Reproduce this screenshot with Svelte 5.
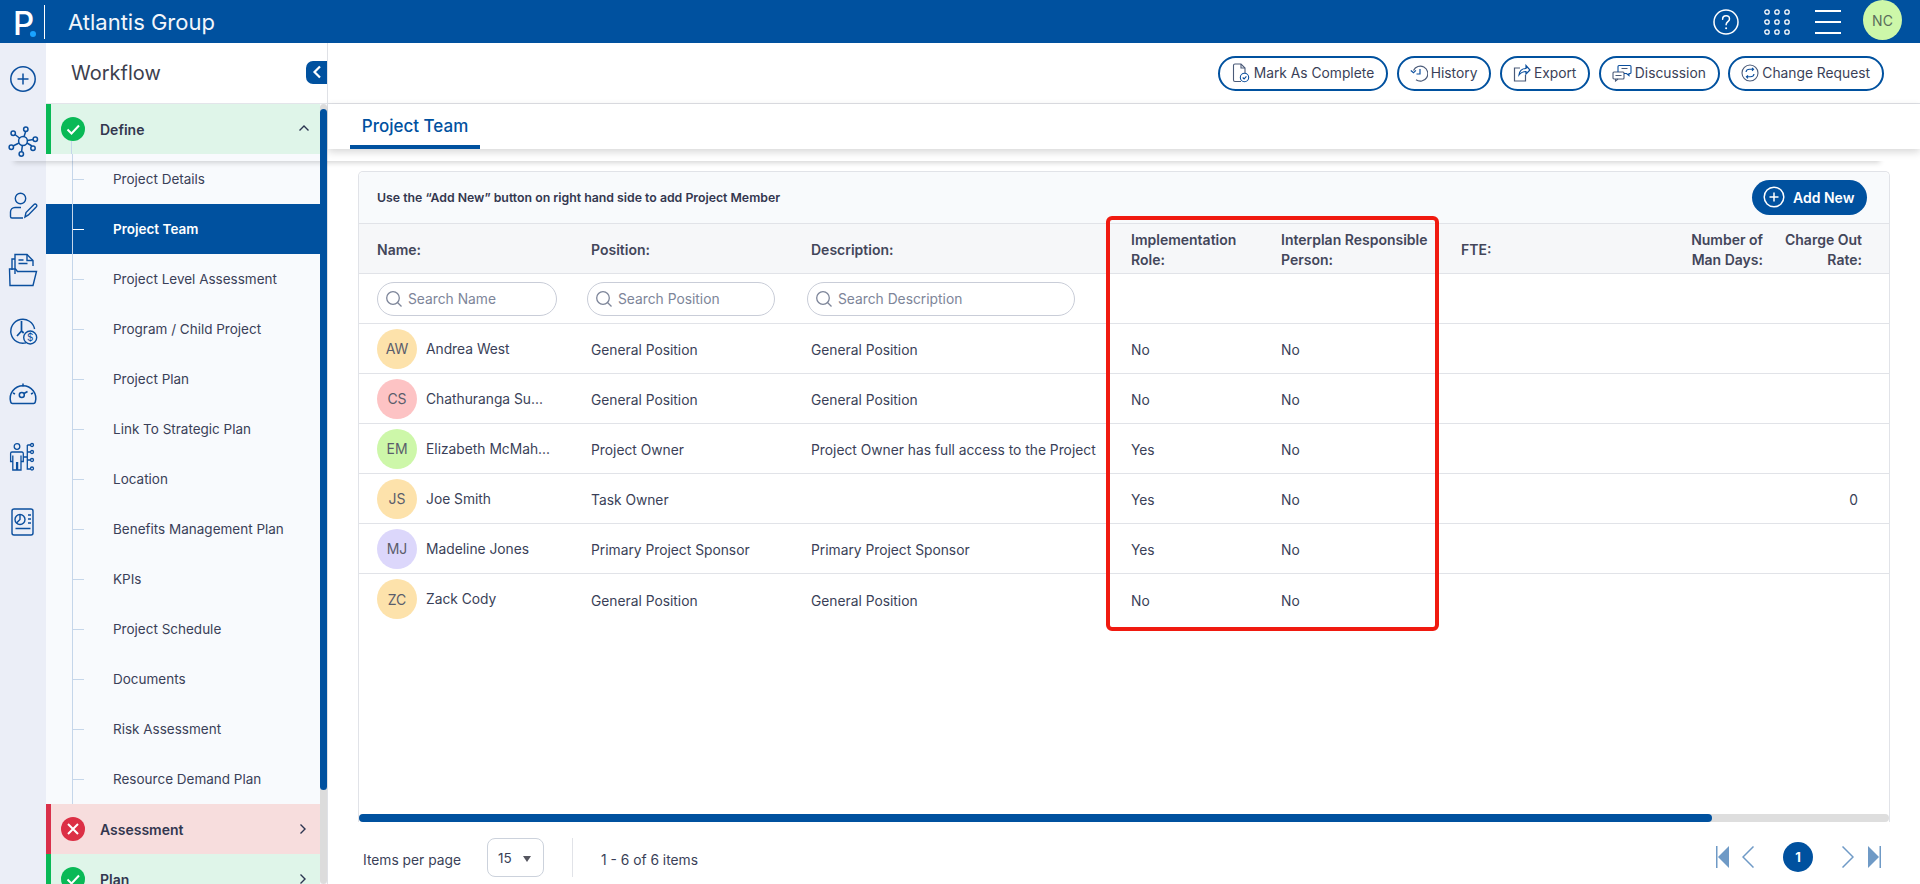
<script>
  const subItems = ['Project Details','Project Team','Project Level Assessment','Program / Child Project','Project Plan','Link To Strategic Plan','Location','Benefits Management Plan','KPIs','Project Schedule','Documents','Risk Assessment','Resource Demand Plan'];
  const people = [
    { i:'AW', c:'#fde2ab', n:'Andrea West', p:'General Position', d:'General Position', r:'No', ip:'No', rate:'' },
    { i:'CS', c:'#fdc3c4', n:'Chathuranga Su...', p:'General Position', d:'General Position', r:'No', ip:'No', rate:'' },
    { i:'EM', c:'#cdf7a9', n:'Elizabeth McMah...', p:'Project Owner', d:'Project Owner has full access to the Project', r:'Yes', ip:'No', rate:'' },
    { i:'JS', c:'#fde2ab', n:'Joe Smith', p:'Task Owner', d:'', r:'Yes', ip:'No', rate:'0' },
    { i:'MJ', c:'#dcd7fb', n:'Madeline Jones', p:'Primary Project Sponsor', d:'Primary Project Sponsor', r:'Yes', ip:'No', rate:'' },
    { i:'ZC', c:'#fde2ab', n:'Zack Cody', p:'General Position', d:'General Position', r:'No', ip:'No', rate:'' }
  ];
</script>

<div class="page">
  <header class="top">
    <div class="logo"><span class="p">P</span><span class="dot"></span></div>
    <div class="org">Atlantis Group</div>
    <div class="top-right">
      <svg class="help" width="26" height="26" viewBox="0 0 26 26" fill="none" stroke="#fff" stroke-width="1.5"><ellipse cx="13" cy="13" rx="12" ry="12"/><path d="M9.6 10.2c0-2 1.5-3.4 3.5-3.4s3.4 1.3 3.4 3.1c0 2.7-3.4 2.9-3.4 5.9" stroke-linecap="round"/><circle cx="13.1" cy="19.2" r="1" fill="#fff" stroke="none"/></svg>
      <svg class="apps" width="26" height="26" viewBox="0 0 26 26" fill="none" stroke="#fff" stroke-width="1.3">
        {#each [3,13,23] as y}{#each [3,13,23] as x}<circle cx={x} cy={y} r="2.2"/>{/each}{/each}
      </svg>
      <svg class="menu" width="26" height="24" viewBox="0 0 26 24" fill="none" stroke="#fff" stroke-width="2"><path d="M0 1h26M0 12h26M0 23h26"/></svg>
      <div class="me">NC</div>
    </div>
  </header>

  <div class="body">
    <nav class="rail">
      <svg style="margin-top:21px" width="30" height="30" viewBox="0 0 30 30" fill="none" stroke="#0b4f9e" stroke-width="1.5"><circle cx="15" cy="15" r="12.2"/><path d="M15 9.5v11M9.5 15h11"/></svg>
      <svg style="margin-top:30px" width="34" height="34" viewBox="0 0 34 34" fill="none" stroke="#0b4f9e" stroke-width="1.5">
        <circle cx="17" cy="17" r="4.4"/>
        <path d="M14 14.5l-5-4M18 12.8l1.8-5.8M21.4 16.4l6-.8M21 19l5 3M16.4 21.3l-.8 6.3M13 19l-6 3"/>
        <circle cx="7.2" cy="9.2" r="2.2"/><circle cx="19.8" cy="5.2" r="2.2"/><circle cx="29.3" cy="15.3" r="2.2"/><circle cx="27" cy="24.3" r="2.2"/><circle cx="15.3" cy="30" r="2.2"/><circle cx="5.3" cy="23.3" r="2.2"/>
      </svg>
      <svg style="margin-top:34px" width="30" height="28" viewBox="0 0 30 28" fill="none" stroke="#0b4f9e" stroke-width="1.4"><circle cx="12.5" cy="6.5" r="5.2"/><path d="M13 15.5H7a4.5 4.5 0 0 0-4.5 4.5v4.5a1.5 1.5 0 0 0 1.5 1.5h11"/><path d="M17 25l1-4.5 8-8a1.6 1.6 0 0 1 2.4 2.2l-8 8.2z"/></svg>
      <svg style="margin-top:33px" width="30" height="34" viewBox="0 0 30 34" fill="none" stroke="#0b4f9e" stroke-width="1.4"><path d="M4 17V6h3M7 21V1.5h12l6 6V13"/><path d="M19 1.5v6h6M10.500 7h5M10.500 10.500h9"/><path d="M2 32.500L1.500 16h6l2 2.500h19l-3.500 14z"/></svg>
      <svg style="margin-top:29px" width="30" height="30" viewBox="0 0 30 30" fill="none" stroke="#0b4f9e" stroke-width="1.4"><path d="M18 26.800A12 12 0 1 1 26.600 13"/><path d="M13.500 5v10l-4.500 5M13.500 15l2.200 2" stroke-width="1.700"/><circle cx="22.200" cy="21.500" r="6.500" fill="#ebeef7"/><text x="22.200" y="25" text-anchor="middle" class="dollar">$</text></svg>
      <svg style="margin-top:34px" width="30" height="26" viewBox="0 0 30 26" fill="none" stroke="#0b4f9e" stroke-width="1.5"><path d="M4.500 23.500h21a2 2 0 0 0 1.800-1.500A12.800 12.800 0 1 0 2.700 22a2 2 0 0 0 1.800 1.500z"/><path d="M15 3.500v3M5 13l2 1M25 13l-2 1"/><circle cx="13.800" cy="15" r="2.500"/><path d="M16 13.500l3.500-2"/></svg>
      <svg style="margin-top:36px" width="30" height="30" viewBox="0 0 30 30" fill="none" stroke="#0b4f9e" stroke-width="1.3"><circle cx="9" cy="4.500" r="2.800"/><path d="M4 10h10a1.500 1.500 0 0 1 1.300 1.500v8h-2.300v-6M4.800 13.500v6H2.600v-8A1.500 1.500 0 0 1 4 10M4.800 17v11h3.800V20M9.600 20v8h3.400V17"/><path d="M15.300 15h4M19.300 3v24h3M19.300 10h3M19.300 18h3M19.300 3h3"/><circle cx="24" cy="3" r="1.500"/><circle cx="24" cy="10" r="1.500"/><circle cx="24" cy="18" r="1.500"/><circle cx="24" cy="26.500" r="1.500"/></svg>
      <svg style="margin-top:35px" width="30" height="30" viewBox="0 0 30 30" fill="none" stroke="#0b4f9e" stroke-width="1.4"><rect x="4" y="2" width="21" height="26" rx="2"/><circle cx="12" cy="12.500" r="5"/><path d="M12 7.500v5l-3.500 3.500M20 8h3M20 12h3M20 16h3M7.500 21.500h15"/></svg>
    </nav>

    <aside class="side">
      <div class="wf-head">
        <span>Workflow</span>
        <span class="collapse"><svg width="10" height="14" viewBox="0 0 10 14" fill="none" stroke="#fff" stroke-width="2.200"><path d="M8 1.500L2.500 7 8 12.500"/></svg></span>
      </div>
      <div class="wf-scroll">
        <div class="wf-list">
          <div class="stage green first">
            <span class="st-ic ok"><svg width="24" height="24" viewBox="0 0 24 24" fill="none" stroke="#fff" stroke-width="2"><path d="M6.500 12.500l4 4 7.500-8"/></svg></span>
            <b>Define</b>
            <svg class="chev up" width="12" height="8" viewBox="0 0 12 8" fill="none" stroke="#2b3450" stroke-width="1.400"><path d="M1.500 6.500L6 2l4.500 4.500"/></svg>
          </div>
          {#each subItems as s, i}
            <div class="sub" class:active={i === 1}><span class="tick"><i></i></span><span class="sub-t">{s}</span></div>
          {/each}
          <div class="stage red">
            <span class="st-ic bad"><svg width="24" height="24" viewBox="0 0 24 24" fill="none" stroke="#fff" stroke-width="2"><path d="M7 7l10 10M17 7L7 17"/></svg></span>
            <b>Assessment</b>
            <svg class="chev" width="8" height="12" viewBox="0 0 8 12" fill="none" stroke="#2b3450" stroke-width="1.400"><path d="M1.500 1.500L6 6l-4.500 4.500"/></svg>
          </div>
          <div class="stage green">
            <span class="st-ic ok"><svg width="24" height="24" viewBox="0 0 24 24" fill="none" stroke="#fff" stroke-width="2"><path d="M6.500 12.500l4 4 7.500-8"/></svg></span>
            <b>Plan</b>
            <svg class="chev" width="8" height="12" viewBox="0 0 8 12" fill="none" stroke="#2b3450" stroke-width="1.400"><path d="M1.500 1.500L6 6l-4.500 4.500"/></svg>
          </div>
        </div>
        <div class="vbar"><div class="vthumb"></div></div>
      </div>
    </aside>

    <main class="main">
      <div class="actions">
        <button><svg width="18" height="20" viewBox="0 0 18 20" fill="none" stroke="#4a5a78" stroke-width="1.100"><path d="M9 18.500H3a1.500 1.500 0 0 1-1.500-1.500V2.500A1.500 1.500 0 0 1 3 1h6l4 4v5"/><path d="M9 1v4h4"/><circle cx="12.500" cy="14.500" r="4.200" stroke="#0b4f9e"/><path d="M10.700 14.500l1.400 1.400 2.300-2.500" stroke="#0b4f9e"/></svg>Mark As Complete</button>
        <button><svg width="18" height="18" viewBox="0 0 18 18" fill="none" stroke="#4a5a78" stroke-width="1.200"><path d="M3.500 6.500A7.500 7.500 0 1 1 6 15.800"/><path d="M.8 6.500l2.700 2.300 2.400-2.500" stroke="#0b4f9e"/><path d="M10 5v5H6.500" stroke="#0b4f9e"/></svg>History</button>
        <button><svg width="18" height="18" viewBox="0 0 18 18" fill="none" stroke="#4a5a78" stroke-width="1.200"><path d="M7 4H1.500v13h11v-6"/><path d="M6 11c.5-4 3-6.500 7-6.500V1.500l4 4.500-4 4V7.500c-3 0-5 1-7 3.500z" stroke="#0b4f9e"/></svg>Export</button>
        <button><svg width="20" height="18" viewBox="0 0 20 18" fill="none" stroke="#4a5a78" stroke-width="1.100"><rect x="1" y="8" width="11" height="7" rx="1"/><path d="M3.500 15v2l2.500-2"/><path d="M6 8V2.500A1 1 0 0 1 7 1.500h11a1 1 0 0 1 1 1v6a1 1 0 0 1-1 1h-1v2l-2.500-2H12" stroke="#0b4f9e"/><path d="M3.500 11.500h6M9.500 4.500h6"/></svg>Discussion</button>
        <button><svg width="18" height="18" viewBox="0 0 18 18" fill="none" stroke="#4a5a78" stroke-width="1.100"><circle cx="9" cy="9" r="8"/><path d="M5 8c.3-2 2-2.800 3.500-2.800h4M11 3.800l1.600 1.500L11 6.800M13 10c-.3 2-2 2.800-3.500 2.800h-4M7 11.300l-1.600 1.500L7 14.300" stroke="#0b4f9e"/></svg>Change Request</button>
      </div>
      <div class="tabbar"><div class="tab">Project Team</div></div>

      <section class="card">
        <div class="toolbar">
          <span>Use the “Add New” button on right hand side to add Project Member</span>
          <button class="add"><svg width="22" height="22" viewBox="0 0 22 22" fill="none" stroke="#fff" stroke-width="1.500"><circle cx="11" cy="11" r="9.800"/><path d="M11 6.500v9M6.500 11h9"/></svg>Add New</button>
        </div>
        <div class="row head">
          <div class="c first-c">Name:</div>
          <div class="c wide">Position:</div>
          <div class="c wide">Description:</div>
          <div class="c">Implementation Role:</div>
          <div class="c">Interplan Responsible Person:</div>
          <div class="c">FTE:</div>
          <div class="c right num">Number of<br />Man Days:</div>
          <div class="c right rate">Charge Out<br />Rate:</div>
        </div>
        <div class="row filter">
          <div class="c first-c"><label class="search s1"><svg width="18" height="18" viewBox="0 0 18 18" fill="none" stroke="#7d8599" stroke-width="1.300"><circle cx="8" cy="8" r="6.300"/><path d="M12.500 12.500l4 4"/></svg><span>Search Name</span></label></div>
          <div class="c"><label class="search s2"><svg width="18" height="18" viewBox="0 0 18 18" fill="none" stroke="#7d8599" stroke-width="1.300"><circle cx="8" cy="8" r="6.300"/><path d="M12.500 12.500l4 4"/></svg><span>Search Position</span></label></div>
          <div class="c"><label class="search s3"><svg width="18" height="18" viewBox="0 0 18 18" fill="none" stroke="#7d8599" stroke-width="1.300"><circle cx="8" cy="8" r="6.300"/><path d="M12.500 12.500l4 4"/></svg><span>Search Description</span></label></div>
        </div>
        {#each people as p, idx}
          <div class="row data" class:end={idx === people.length - 1}>
            <div class="c first-c person"><span class="av" style="background:{p.c}">{p.i}</span><span class="pn">{p.n}</span></div>
            <div class="c wide">{p.p}</div>
            <div class="c wide nw">{p.d}</div>
            <div class="c">{p.r}</div>
            <div class="c">{p.ip}</div>
            <div class="c"></div>
            <div class="c"></div>
            <div class="c right rate-v">{p.rate}</div>
          </div>
        {/each}
        <div class="grow"></div>
        <div class="hbar"><div class="hthumb"></div></div>
      </section>

      <footer class="pager">
        <span class="ipp">Items per page</span>
        <span class="sel"><span>15</span><i></i></span>
        <span class="sep"></span>
        <span class="count">1 - 6 of 6 items</span>
        <div class="pg">
          <svg width="13" height="22" viewBox="0 0 13 22" fill="#6f9ac6" stroke="none"><rect x="0" y="0" width="1.500" height="22"/><path d="M13 0v22L2 11z"/></svg>
          <svg class="prev" width="12" height="22" viewBox="0 0 12 22" fill="none" stroke="#6f9ac6" stroke-width="1.500"><path d="M11.500 .5L1 11l10.500 10.500"/></svg>
          <span class="cur">1</span>
          <svg class="next" width="12" height="22" viewBox="0 0 12 22" fill="none" stroke="#6f9ac6" stroke-width="1.500"><path d="M.5 .5L11 11 .5 21.500"/></svg>
          <svg class="last" width="13" height="22" viewBox="0 0 13 22" fill="#6f9ac6" stroke="none"><rect x="11.500" y="0" width="1.500" height="22"/><path d="M0 0v22L11 11z"/></svg>
        </div>
      </footer>
    </main>
  </div>

  <div class="ghost-shadow"></div>
  <div class="redbox"></div>
</div>

<style>
  :global(body) { margin: 0; }
  .page { position: relative; width: 1920px; height: 884px; overflow: hidden; display: flex; flex-direction: column; font-family: Inter, "Liberation Sans", sans-serif; font-size: 14px; color: #3a3f58; background: #fff; }
  .top { height: 43px; flex: none; background: #00519f; display: flex; align-items: center; color: #fff; }
  .logo { width: 45px; height: 34px; box-sizing: border-box; border-right: 1px solid #fff; position: relative; }
  .p { position: absolute; left: 13px; top: -1px; font-size: 33px; line-height: 38px; font-weight: 500; }
  .dot { position: absolute; right: 8px; bottom: 2px; width: 6px; height: 6px; border-radius: 50%; background: #1aa3ff; }
  .org { margin-left: 23px; font-size: 22px; font-weight: 400; color: #f2f6fb; }
  .top-right { margin-left: auto; display: flex; align-items: center; }
  .help { margin-right: 25px; }
  .apps { margin-right: 25px; }
  .menu { margin-right: 22px; }
  .me { width: 39px; height: 40px; border-radius: 50%; background: #cdf7a9; color: #5a6d5c; display: flex; align-items: center; justify-content: center; font-size: 14px; margin-right: 18px; margin-top: -3px; }

  .body { flex: 1; display: flex; min-height: 0; }
  .rail { width: 46px; flex: none; background: #ebeef7; display: flex; flex-direction: column; align-items: center; }
  .rail svg { flex: none; }
  .dollar { font-family: Inter, sans-serif; font-size: 10px; fill: #0b4f9e; stroke: none; }

  .side { width: 282px; flex: none; display: flex; flex-direction: column; border-right: 1px solid #dfe1e6; box-sizing: border-box; background: #fff; }
  .wf-head { height: 61px; flex: none; display: flex; align-items: center; justify-content: space-between; padding-left: 25px; font-size: 20px; color: #3d3f4e; box-sizing: border-box; border-bottom: 1px solid #e3e5ea; }
  .collapse { width: 21px; height: 23px; background: #00519f; border-radius: 7px 0 0 7px; display: flex; align-items: center; justify-content: center; margin-top: -2px; }
  .wf-scroll { flex: 1; display: flex; min-height: 0; overflow: hidden; background: #f8fafd; position: relative; }
  .wf-list { flex: 1; min-width: 0; margin-right: -7px; }
  .stage { height: 50px; display: flex; align-items: center; box-sizing: border-box; border-left: 5px solid #09b956; padding-left: 10px; margin-right: 7px; position: relative; }
  .stage.green { background: #dff5e9; }
  .stage.red { background: #f7dddd; border-left-color: #d9304a; }
  .stage b { font-weight: 600; font-size: 14px; color: #33374f; margin-left: 15px; }
  .st-ic { width: 24px; height: 24px; border-radius: 50%; display: flex; position: relative; z-index: 1; }
  .ok { background: #09b956; }
  .bad { background: #dc2f45; }
  .chev { position: absolute; right: 13px; top: 19px; }
  .chev.up { right: 10px; top: 20px; }
  .stage.first::after { content: ""; position: absolute; left: 20px; top: 37px; bottom: 0; border-left: 1.500px solid #c5d6ea; }
  .sub { height: 50px; display: flex; align-items: center; padding-left: 26px; color: #3a3f58; margin-right: 7px; }
  .tick { width: 12px; height: 100%; box-sizing: border-box; border-left: 1.500px solid #c5d6ea; display: flex; align-items: center; flex: none; }
  .tick i { display: block; height: 1px; width: 11px; background: #c5d6ea; }
  .sub-t { margin-left: 29px; font-size: 13.500px; }
  .sub.active { background: #00519f; margin-right: 0; }
  .sub.active .sub-t { color: #fff; font-weight: 600; }
  .sub.active .tick i { background: #fff; }
  .vbar { width: 7px; flex: none; background: #dcdcdc; border-radius: 4px; position: relative; z-index: 1; }
  .vthumb { height: 681px; margin-top: 5px; background: #00519f; border-radius: 4px; }

  .main { flex: 1; min-width: 0; display: flex; flex-direction: column; }
  .actions { height: 61px; flex: none; box-sizing: border-box; border-bottom: 1px solid #dfe1e6; display: flex; justify-content: flex-end; align-items: center; gap: 8.500px; padding-right: 36px; }
  .actions button { height: 35px; box-sizing: border-box; background: #fff; border: 2px solid #00519f; border-radius: 18px; display: flex; align-items: center; gap: 3px; padding: 0 12px 0 11px; font: inherit; font-size: 13.800px; color: #3a3f58; }
  .actions button:first-child { padding-left: 12px; gap: 4px; }
  .tabbar { height: 45px; flex: none; display: flex; padding-left: 22px; box-shadow: 0 3px 8px rgba(0,0,0,.16); }
  .tab { width: 130px; box-sizing: border-box; border-bottom: 4px solid #00519f; font-size: 17px; font-weight: 500; color: #00519f; text-align: center; padding-top: 12px; }

  .card { margin: 22px 30px 0; height: 651px; flex: none; box-sizing: border-box; border: 1px solid #e1e3e8; border-bottom: 0; border-radius: 5px 5px 0 0; display: flex; flex-direction: column; }
  .toolbar { height: 52px; flex: none; box-sizing: border-box; background: #f8fafc; border-bottom: 1px solid #e1e3e8; display: flex; align-items: center; justify-content: space-between; padding: 0 22px 1px 18px; font-size: 12.300px; font-weight: 600; color: #33374f; border-radius: 5px 5px 0 0; }
  .add { width: 115px; height: 35px; border: 0; background: #00519f; color: #fff; border-radius: 18px; display: flex; align-items: center; gap: 8px; padding: 0 0 0 11px; font: inherit; font-size: 14px; font-weight: 600; }
  .row { height: 50px; flex: none; box-sizing: border-box; border-bottom: 1px solid #e1e3e8; display: grid; grid-template-columns: 209px 220px 324px 150px 180px 1fr 142px 107px; align-items: center; }
  .head { background: #f6f7f9; font-weight: 600; font-size: 14px; line-height: 20px; color: #43465a; padding-top: 2px; }
  .c { padding-left: 19px; min-width: 0; }
  .first-c { padding-left: 18px; }
  .wide { padding-left: 23px; }
  .nw { white-space: nowrap; }
  .right { text-align: right; padding-left: 0; }
  .num { padding-right: 19px; }
  .rate { padding-right: 27px; }
  .rate-v { padding-right: 31px; }
  .data { font-size: 13.800px; color: #3a3f58; padding-top: 3px; }
  .data.end { border-bottom: 0; }
  .person { display: flex; align-items: center; gap: 9px; margin-top: -3px; }
  .av { width: 40px; height: 40px; border-radius: 50%; display: flex; align-items: center; justify-content: center; font-size: 14px; color: #5a5d6b; flex: none; }
  .pn { white-space: nowrap; }
  .search { height: 34px; box-sizing: border-box; border: 1px solid #c9cdd8; border-radius: 17px; display: flex; align-items: center; gap: 5px; padding-left: 7px; color: #7d8599; font-size: 13.800px; white-space: nowrap; overflow: hidden; }
  .s1 { width: 180px; }
  .s2 { width: 188px; }
  .s3 { width: 268px; }
  .grow { flex: 1; }
  .hbar { height: 8px; flex: none; background: #dedede; border-radius: 4px; }
  .hthumb { height: 8px; width: 1353px; background: #00519f; border-radius: 4px; }

  .pager { flex: 1; display: flex; align-items: center; padding: 9px 39px 0 35px; }
  .ipp { font-size: 13.800px; width: 124px; margin-top: 4px; }
  .sel { width: 57px; height: 39px; box-sizing: border-box; border: 1px solid #ccd2dc; border-radius: 8px; display: flex; align-items: center; padding-left: 10px; font-size: 13.500px; }
  .sel i { margin-left: 11px; margin-top: 2px; border: 4.500px solid transparent; border-top: 6px solid #55565f; border-bottom: 0; }
  .sep { width: 1px; height: 39px; background: #e1e3e8; margin-left: 28px; }
  .count { margin-left: 28px; font-size: 13.800px; margin-top: 4px; }
  .pg { margin-left: auto; display: flex; align-items: center; margin-top: -2px; }
  .prev { margin-left: 13px; }
  .cur { width: 30px; height: 30px; border-radius: 50%; background: #00519f; color: #fff; font-weight: 700; font-size: 13px; display: flex; align-items: center; justify-content: center; margin-left: 29px; }
  .next { margin-left: 29px; }
  .last { margin-left: 14px; }

  .ghost-shadow { position: absolute; left: 14px; right: 40px; top: 60px; height: 101px; box-shadow: 0 2px 5px rgba(0,0,0,.16); pointer-events: none; clip-path: inset(100% -20px -20px -20px); }
  .redbox { position: absolute; left: 1106px; top: 216px; width: 333px; height: 415px; box-sizing: border-box; border: 4px solid #f01a10; border-radius: 6px; pointer-events: none; }
</style>
